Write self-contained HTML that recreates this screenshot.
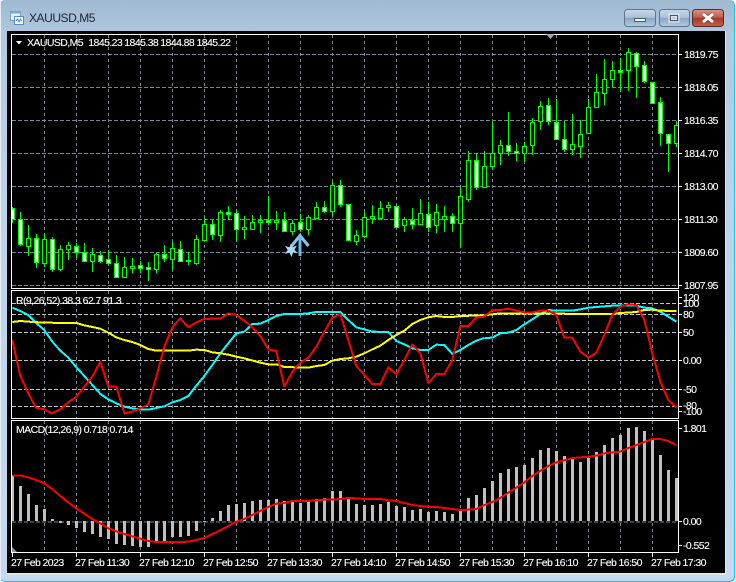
<!DOCTYPE html>
<html><head><meta charset="utf-8"><title>XAUUSD,M5</title>
<style>
html,body{margin:0;padding:0;width:736px;height:582px;overflow:hidden;background:#fff}
svg{display:block}
text{font-family:"Liberation Sans",sans-serif;font-size:10.5px;fill:#fff;stroke:#fff;stroke-width:.12px;letter-spacing:-.58px}
.c{shape-rendering:crispEdges}
</style></head><body>
<svg width="736" height="582" viewBox="0 0 736 582" xmlns="http://www.w3.org/2000/svg">
<defs>
<linearGradient id="f" x1="0" y1="0" x2="0" y2="1"><stop offset="0" stop-color="#9fb9d0"/><stop offset=".06" stop-color="#b0c9e0"/><stop offset=".3" stop-color="#b9d2ec"/><stop offset="1" stop-color="#c4d9f0"/></linearGradient>
<linearGradient id="b" x1="0" y1="0" x2="0" y2="1"><stop offset="0" stop-color="#c9d9e8"/><stop offset=".48" stop-color="#a9c0d8"/><stop offset=".5" stop-color="#8aa6c4"/><stop offset="1" stop-color="#b3cbe2"/></linearGradient>
<linearGradient id="r" x1="0" y1="0" x2="0" y2="1"><stop offset="0" stop-color="#d8958a"/><stop offset=".48" stop-color="#bd5a4a"/><stop offset=".5" stop-color="#a53626"/><stop offset="1" stop-color="#c46350"/></linearGradient>
<clipPath id="main"><rect x="12" y="35" width="666" height="253"/></clipPath>
<clipPath id="rsi"><rect x="12" y="291" width="666" height="127"/></clipPath>
<clipPath id="macd"><rect x="12" y="421" width="666" height="131"/></clipPath>
</defs>
<rect x="0" y="0" width="735" height="582" rx="5" fill="#22c5de"/>
<rect x="0" y="0" width="734" height="581" rx="5" fill="url(#f)"/>
<rect x="0" y="0" width="1" height="581" fill="#e8eef5"/>
<rect x="7" y="31" width="719" height="544" fill="#dfe7f1"/>
<rect x="7" y="31" width="718" height="542" fill="#000"/>

<!-- title -->
<g class="c">
<rect x="10.5" y="11.5" width="10" height="9" fill="#e6f0fa" stroke="#6f9cc8"/>
<rect x="10.5" y="11.5" width="10" height="2" fill="#79a8d8"/>
<rect x="14.5" y="16.5" width="9" height="8" fill="#f4f8fc" stroke="#5c8cc0"/>
<path d="M16 21l1.500-2 1.500 3 1.500-3 1 2" fill="none" stroke="#4a7fc0"/>
</g>
<text x="29" y="22" style="font-size:12px;fill:#1c2430;stroke:none;letter-spacing:-.45px">XAUUSD,M5</text>

<!-- buttons -->
<rect x="624.500" y="9.500" width="31" height="17" rx="3" fill="url(#b)" stroke="#5f738c"/>
<rect x="634.500" y="18.500" width="11" height="3" fill="#f2f5f8" stroke="#4a5a6c"/>
<rect x="659.500" y="9.500" width="30" height="17" rx="3" fill="url(#b)" stroke="#5f738c"/>
<rect x="669" y="14" width="10" height="8" fill="none" stroke="#e6edf4" stroke-width="1"/>
<rect x="670.500" y="15.500" width="7" height="5" fill="#dfe7ef" stroke="#46566a"/>
<rect x="672.500" y="17.500" width="3" height="1" fill="#8da2b8"/>
<rect x="692.500" y="9.500" width="31" height="17" rx="3" fill="url(#r)" stroke="#5c2a24"/>
<path d="M703 14l10 8M713 14l-10 8" stroke="#5c2a24" stroke-width="4.500" opacity=".5"/>
<path d="M703 14l10 8M713 14l-10 8" stroke="#fff" stroke-width="3"/>

<!-- grid -->
<g class="c" fill="none" stroke="#778899">
<path stroke-dasharray="4 2" d="M12 54H678M12 87H678M12 120H678M12 153H678M12 186H678M12 219H678M12 252H678M12 285H678M12 521.500H678" transform="translate(0,.5)"/>
<g stroke-dasharray="3 3">
<path d="M44.500 35V288M76.500 35V288M108.500 35V288M140.500 35V288M172.500 35V288M204.500 35V288M236.500 35V288M268.500 35V288M300.500 35V288M332.500 35V288M364.500 35V288M396.500 35V288M428.500 35V288M460.500 35V288M492.500 35V288M524.500 35V288M556.500 35V288M588.500 35V288M620.500 35V288M652.500 35V288"/>
<path d="M44.500 291V418M76.500 291V418M108.500 291V418M140.500 291V418M172.500 291V418M204.500 291V418M236.500 291V418M268.500 291V418M300.500 291V418M332.500 291V418M364.500 291V418M396.500 291V418M428.500 291V418M460.500 291V418M492.500 291V418M524.500 291V418M556.500 291V418M588.500 291V418M620.500 291V418M652.500 291V418"/>
<path d="M44.500 421V552M76.500 421V552M108.500 421V552M140.500 421V552M172.500 421V552M204.500 421V552M236.500 421V552M268.500 421V552M300.500 421V552M332.500 421V552M364.500 421V552M396.500 421V552M428.500 421V552M460.500 421V552M492.500 421V552M524.500 421V552M556.500 421V552M588.500 421V552M620.500 421V552M652.500 421V552"/>
</g>
</g>
<path class="c" fill="none" stroke="#c0c4c8" stroke-dasharray="4 2" d="M12 303.500H678M12 314.500H678M12 332.500H678M12 360.500H678M12 389.500H678M12 406.500H678"/>

<!-- candles -->
<g clip-path="url(#main)" class="c">
<path fill="none" stroke="#00ff00" d="M12.500 207V223M20.500 212V246M28.500 225V256M36.500 234V268M44.500 233V267M52.500 237V272M60.500 245V271M68.500 242V260M76.500 243V258M84.500 243V262M92.500 248V272M100.500 251V263M108.500 250V265M116.500 255V278M124.500 257V278M132.500 258V273M140.500 261V273M148.500 262V281M156.500 253V273M164.500 245V262M172.500 241V269M180.500 241V262M188.500 252V265M196.500 235V265M204.500 218V240M212.500 220V240M220.500 210V242M228.500 206V220M236.500 210V241M244.500 216V239M252.500 215V229M260.500 215V233M268.500 196V225M276.500 211V230M284.500 212V232M292.500 220V235M300.500 214V232M308.500 215V235M316.500 202V219M324.500 201V213M332.500 182V216M340.500 180V207M348.500 204V241M356.500 230V245M364.500 212V238M372.500 205V224M380.500 201V218M388.500 202V212M396.500 206V227M404.500 217V232M412.500 208V229M420.500 199V225M428.500 202V232M436.500 204V233M444.500 206V232M452.500 213V232M460.500 187V247M468.500 151V202M476.500 153V190M484.500 151V187M492.500 122V169M500.500 140V165M508.500 112V156M516.500 143V161M524.500 142V162M532.500 118V155M540.500 101V130M548.500 98V125M556.500 99V140M564.500 121V152M572.500 114V155M580.500 120V158M588.500 99V134M596.500 74V107M604.500 59V105M612.500 61V87M620.500 58V92M628.500 48V91M636.500 52V98M644.500 61V83M652.500 82V104M660.500 97V146M668.500 134V172M676.500 121V147"/>
<path fill="#000" stroke="#00ff00" d="M26.500 238.500h4v8h-4zM42.500 239.500h4v24h-4zM58.500 249.500h4v20h-4zM66.500 245.500h4v4h-4zM90.500 254.500h4v7h-4zM122.500 267.500h4v10h-4zM130.500 266.500h4v2h-4zM154.500 254.500h4v15h-4zM170.500 248.500h4v11h-4zM194.500 239.500h4v24h-4zM202.500 224.500h4v16h-4zM218.500 212.500h4v23h-4zM242.500 227.500h4v2h-4zM250.500 222.500h4v7h-4zM258.500 220.500h4v2h-4zM274.500 220.500h4v2h-4zM290.500 223.500h4v8h-4zM306.500 217.500h4v12h-4zM314.500 207.500h4v11h-4zM330.500 185.500h4v26h-4zM354.500 235.500h4v6h-4zM362.500 217.500h4v19h-4zM370.500 216.500h4v2h-4zM378.500 208.500h4v10h-4zM386.500 205.500h4v2h-4zM402.500 219.500h4v6h-4zM418.500 213.500h4v11h-4zM434.500 212.500h4v13h-4zM442.500 216.500h4v3h-4zM458.500 196.500h4v27h-4zM466.500 160.500h4v39h-4zM482.500 166.500h4v21h-4zM490.500 153.500h4v13h-4zM498.500 145.500h4v8h-4zM522.500 146.500h4v7h-4zM530.500 122.500h4v23h-4zM538.500 106.500h4v15h-4zM570.500 144.500h4v5h-4zM578.500 134.500h4v12h-4zM586.500 107.500h4v26h-4zM594.500 92.500h4v15h-4zM602.500 79.500h4v14h-4zM610.500 70.500h4v9h-4zM626.500 52.500h4v18h-4zM674.500 125.500h4v18h-4z"/>
<path fill="#fff" stroke="#00ff00" d="M10.500 208.500h4v11h-4zM18.500 219.500h4v25h-4zM34.500 238.500h4v24h-4zM50.500 239.500h4v30h-4zM74.500 246.500h4v6h-4zM82.500 252.500h4v9h-4zM98.500 255.500h4v6h-4zM106.500 259.500h4v4h-4zM114.500 263.500h4v14h-4zM138.500 265.500h4v3h-4zM146.500 267.500h4v2h-4zM162.500 254.500h4v4h-4zM178.500 249.500h4v12h-4zM186.500 260.500h4v1h-4zM210.500 224.500h4v10h-4zM226.500 212.500h4v2h-4zM234.500 213.500h4v16h-4zM266.500 220.500h4v2h-4zM282.500 220.500h4v11h-4zM298.500 222.500h4v7h-4zM322.500 207.500h4v4h-4zM338.500 185.500h4v19h-4zM346.500 204.500h4v36h-4zM394.500 206.500h4v21h-4zM410.500 220.500h4v4h-4zM426.500 214.500h4v13h-4zM450.500 216.500h4v7h-4zM474.500 160.500h4v27h-4zM506.500 145.500h4v6h-4zM514.500 151.500h4v2h-4zM546.500 105.500h4v16h-4zM554.500 122.500h4v17h-4zM562.500 139.500h4v10h-4zM618.500 70.500h4v2h-4zM634.500 53.500h4v13h-4zM642.500 65.500h4v16h-4zM650.500 82.500h4v21h-4zM658.500 102.500h4v31h-4zM666.500 134.500h4v9h-4z"/>
</g>

<!-- arrow and star -->
<g>
<path d="M291.500 246L300 235.500L308.500 246" fill="none" stroke="#87c6ee" stroke-width="3"/>
<rect x="298.500" y="236" width="3" height="20" fill="#6db8ec"/>
<polygon points="291,243.500 292.600,247.200 297,245.500 294.400,249.700 297.500,253 293,252.500 291.500,257 289.500,252.800 285,253.800 287.700,250 285,246 289.500,247.200" fill="#a6dcf5"/>
</g>

<!-- RSI lines -->
<g clip-path="url(#rsi)" fill="none" stroke-width="6" class="c" stroke-linejoin="round">
<g transform="translate(0,290) scale(.33333)">
<polyline stroke="#00ffff" points="37,53 61,63 85,75 109,100 133,120 157,155 181,182 205,203 229,232 253,258 277,285 301,312 325,328 349,340 373,350 397,355 421,358 445,359 469,354 493,349 517,337 541,330 565,318 589,287 613,258 637,225 661,190 685,160 709,130 733,125"/>
<polyline stroke="#ffff00" points="37,96 61,93 85,95 133,98 229,99 253,106 301,116 325,128 349,142 373,150 397,156 421,165 445,177 469,182 565,182 589,179 613,180 637,187 661,190 685,194 709,200 733,205"/>
<polyline stroke="#ff0000" points="37,150 60,255 85,310 108,353 133,358 155,370 181,358 205,337 229,320 253,290 277,260 301,215 325,290 349,290 373,370 397,365 421,355 445,343 469,260 493,170 517,112 541,85 565,112 589,97 613,87 637,86 661,86 685,70 709,75 733,92"/>
</g>
<g transform="translate(240,290) scale(.33333)">
<polyline stroke="#00ffff" points="13,125 37,102 61,101 85,90 109,78 133,72 181,72 205,70 229,66 301,66 325,90 349,112 373,118 397,125 445,126 469,153 493,163 517,175 541,180 565,180 589,164 613,165 637,192 661,180 685,165 709,152 733,144"/>
<polyline stroke="#ffff00" points="13,205 61,218 85,223 109,223 133,231 205,233 229,228 253,225 277,212 301,207 325,205 349,200 373,190 397,178 421,167 445,150 469,135 493,122 517,102 541,90 565,82 589,78 613,81 637,81 661,78 733,76"/>
<polyline stroke="#ff0000" points="13,92 37,112 61,138 85,178 109,183 133,290 157,245 181,218 205,203 229,170 253,125 277,83 301,72 325,150 349,228 373,255 397,282 421,282 445,232 469,253 493,210 517,163 541,190 565,280 589,252 613,252 637,210 661,108 685,108 709,82 733,80"/>
</g>
<g transform="translate(486,290) scale(.33333)">
<polyline stroke="#00ffff" points="-5,144 19,143 43,130 67,128 91,120 115,103 139,88 163,72 187,60 211,62 259,62 283,58 307,53 331,51 379,47 403,46 451,47 475,53 499,55 523,65 547,80 571,95"/>
<polyline stroke="#ffff00" points="-5,76 43,70 187,71 379,72 403,69 451,66 475,60 499,59 523,62 571,63"/>
<polyline stroke="#ff0000" points="-5,80 19,60 43,60 67,56 91,62 115,67 139,67 163,62 187,62 211,75 235,143 259,143 283,185 307,203 331,188 355,135 379,75 403,50 427,43 451,45 475,90 499,190 523,275 547,330 571,352"/>
</g>
</g>

<!-- MACD -->
<g clip-path="url(#macd)" class="c">
<path fill="none" stroke="#c0c0c0" stroke-width="3" d="M12.500 521V475M20.500 521V486M28.500 521V494M36.500 521V505M44.500 521V509M52.500 521V519M60.500 521V523M68.500 521V525M76.500 521V528M84.500 521V532M92.500 521V534M100.500 521V537M108.500 521V539M116.500 521V544M124.500 521V545M132.500 521V546M140.500 521V547M148.500 521V547M156.500 521V542M164.500 521V542M172.500 521V537M180.500 521V537M188.500 521V536M196.500 521V531M204.500 521V522M212.500 521V518M220.500 521V511M228.500 521V505M236.500 521V504M244.500 521V503M252.500 521V501M260.500 521V500M268.500 521V500M276.500 521V499M284.500 521V501M292.500 521V502M300.500 521V503M308.500 521V502M316.500 521V499M324.500 521V498M332.500 521V491M340.500 521V491M348.500 521V498M356.500 521V504M364.500 521V505M372.500 521V505M380.500 521V504M388.500 521V502M396.500 521V506M404.500 521V507M412.500 521V510M420.500 521V509M428.500 521V512M436.500 521V511M444.500 521V512M452.500 521V514M460.500 521V511M468.500 521V498M476.500 521V495M484.500 521V488M492.500 521V481M500.500 521V473M508.500 521V469M516.500 521V467M524.500 521V465M532.500 521V458M540.500 521V450M548.500 521V448M556.500 521V451M564.500 521V456M572.500 521V459M580.500 521V462M588.500 521V458M596.500 521V452M604.500 521V445M612.500 521V438M620.500 521V435M628.500 521V428M636.500 521V427M644.500 521V431M652.500 521V439M660.500 521V455M668.500 521V470M676.500 521V478"/>
<g fill="none" stroke="#ff0000" stroke-width="6" stroke-linejoin="round">
<polyline transform="translate(0,415) scale(.33333)" points="37,181 61,181 85,187 109,195 133,205 157,222 181,243 205,262 229,280 253,296 277,312 301,325 325,340 349,349 373,357 397,364 421,371 445,378 469,381 493,381 517,381 541,381 565,380 589,375 613,369 637,357 661,346 685,333 709,320 733,312"/>
<polyline transform="translate(240,415) scale(.33333)" points="13,312 37,300 61,288 85,276 109,266 133,264 157,258 181,258 205,258 229,256 253,254 277,254 301,252 325,249 349,250 373,252 397,252 421,252 445,256 469,258 493,264 517,270 541,273 565,275 589,276 613,279 637,282 661,285 685,284 709,282 733,270"/>
<polyline transform="translate(486,415) scale(.33333)" points="-5,270 19,261 43,249 67,233 91,218 115,202 139,183 163,168 187,153 211,142 235,136 259,129 283,127 307,125 331,122 355,115 379,112 403,110 427,99 451,90 475,81 499,72 523,72 547,78 571,90"/>
</g>
</g>

<!-- frames and ticks -->
<g class="c" fill="none" stroke="#fff">
<rect x="11.500" y="34.500" width="667" height="254"/>
<rect x="11.500" y="290.500" width="667" height="128"/>
<rect x="11.500" y="420.500" width="667" height="132"/>
<path d="M679 54.500h3M679 87.500h3M679 120.500h3M679 153.500h3M679 186.500h3M679 219.500h3M679 252.500h3M679 285.500h3M679 297.500h3M679 303.500h3M679 314.500h3M679 332.500h3M679 360.500h3M679 389.500h3M679 406.500h3M679 411.500h3M679 428.500h3M679 521.500h3M679 545.500h3"/>
<path d="M12.500 553v4M76.500 553v4M140.500 553v4M204.500 553v4M268.500 553v4M332.500 553v4M396.500 553v4M460.500 553v4M524.500 553v4M588.500 553v4M652.500 553v4"/>
</g>
<polygon points="546,34 555,34 550.500,39" fill="#a8a8a8"/>
<polygon points="12,547 17,552 12,552" fill="#8898aa"/>
<polygon points="16,41 22,41 19,44.500" fill="#fff"/>

<!-- chart text -->
<text x="27" y="46">XAUUSD,M5</text>
<text x="88.300" y="46">1845.23</text>
<text x="124.300" y="46">1845.38</text>
<text x="160.300" y="46">1844.88</text>
<text x="196.500" y="46">1845.22</text>
<text x="16" y="304">R(9,26,52) 38.3 62.7 91.3</text>
<text x="16" y="433">MACD(12,26,9) 0.718 0.714</text>

<text x="684" y="58">1819.75</text>
<text x="684" y="91">1818.05</text>
<text x="684" y="124">1816.35</text>
<text x="684" y="157">1814.70</text>
<text x="684" y="190">1813.00</text>
<text x="684" y="223">1811.30</text>
<text x="684" y="256">1809.60</text>
<text x="684" y="289">1807.95</text>

<text x="683" y="301">120</text>
<text x="683" y="307">100</text>
<text x="683" y="318">80</text>
<text x="683" y="336">50</text>
<text x="683" y="364">0.00</text>
<text x="683" y="393">-50</text>
<text x="683" y="409">-80</text>
<text x="683" y="415">-100</text>
<text x="683" y="432">1.801</text>
<text x="683" y="525">0.00</text>
<text x="683" y="549">-0.552</text>

<text x="11" y="566">27 Feb 2023</text>
<text x="75" y="566">27 Feb 11:30</text>
<text x="139" y="566">27 Feb 12:10</text>
<text x="203" y="566">27 Feb 12:50</text>
<text x="267" y="566">27 Feb 13:30</text>
<text x="331" y="566">27 Feb 14:10</text>
<text x="395" y="566">27 Feb 14:50</text>
<text x="459" y="566">27 Feb 15:30</text>
<text x="523" y="566">27 Feb 16:10</text>
<text x="587" y="566">27 Feb 16:50</text>
<text x="651" y="566">27 Feb 17:30</text>
</svg>
</body></html>
